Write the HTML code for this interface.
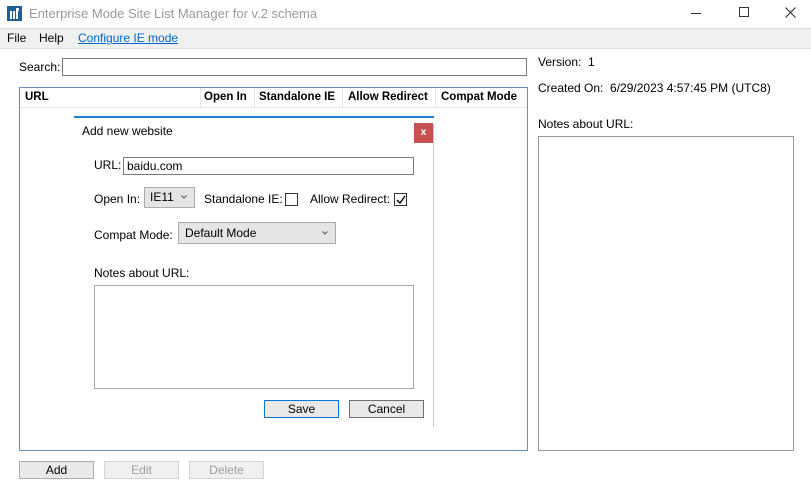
<!DOCTYPE html>
<html><head><style>
*{box-sizing:border-box;margin:0;padding:0}
body{width:811px;height:486px;background:#fff;font-family:"Segoe UI","Liberation Sans",sans-serif;font-size:12px;color:#000;position:relative;overflow:hidden}
.a{position:absolute}
.btn{position:absolute;height:18px;background:#e9e9e9;border:1px solid #adadad;text-align:center;line-height:16px;font-size:12px}
</style></head><body>
<div class="a" style="left:0;top:0;width:811px;height:28px;background:#fff"></div>
<div class="a" style="left:7px;top:6px;width:15px;height:15px;background:#1f5f9e">
 <div class="a" style="left:3px;top:5px;width:9px;height:8px;background:repeating-linear-gradient(90deg,#fff 0 2px,transparent 2px 3px)"></div>
 <div class="a" style="left:9px;top:2px;width:3px;height:3px;background:#fff"></div>
</div>
<div class="a" style="left:29px;top:6px;font-size:13px;color:#9a9a9a">Enterprise Mode Site List Manager for v.2 schema</div>
<div class="a" style="left:691px;top:13px;width:10px;height:1px;background:#333"></div>
<div class="a" style="left:739px;top:7px;width:10px;height:10px;border:1px solid #333"></div>
<svg class="a" style="left:785px;top:7px" width="11" height="11"><path d="M0.5 0.5L10.5 10.5M10.5 0.5L0.5 10.5" stroke="#333" stroke-width="1.1"/></svg>
<div class="a" style="left:0;top:28px;width:811px;height:21px;background:#f0f0f0;border-top:1px solid #ddd;border-bottom:1px solid #ddd"></div>
<div class="a" style="left:7px;top:31px">File</div>
<div class="a" style="left:39px;top:31px">Help</div>
<div class="a" style="left:78px;top:31px;color:#0066cc;text-decoration:underline">Configure IE mode</div>
<div class="a" style="left:19px;top:60px">Search:</div>
<div class="a" style="left:62px;top:58px;width:465px;height:18px;border:1px solid #7a7a7a"></div>
<div class="a" style="left:19px;top:87px;width:509px;height:364px;border:1px solid #6d8fb5"></div>
<div class="a" style="left:20px;top:88px;width:507px;height:20px;border-bottom:1px solid #e5e5e5;font-weight:bold;font-size:11.5px">
 <span class="a" style="left:5px;top:3px">URL</span>
 <span class="a" style="left:180px;top:0;width:1px;height:20px;background:#e5e5e5"></span>
 <span class="a" style="left:184px;top:3px">Open In</span>
 <span class="a" style="left:234px;top:0;width:1px;height:20px;background:#e5e5e5"></span>
 <span class="a" style="left:239px;top:3px">Standalone IE</span>
 <span class="a" style="left:322px;top:0;width:1px;height:20px;background:#e5e5e5"></span>
 <span class="a" style="left:328px;top:3px">Allow Redirect</span>
 <span class="a" style="left:415px;top:0;width:1px;height:20px;background:#e5e5e5"></span>
 <span class="a" style="left:421px;top:3px">Compat Mode</span>
</div>
<div class="a" style="left:74px;top:116px;width:360px;height:2px;background:#1e80d8"></div>
<div class="a" style="left:433px;top:125px;width:1px;height:302px;background:#c8c8c8"></div>
<div class="a" style="left:82px;top:124px">Add new website</div>
<div class="a" style="left:414px;top:123px;width:19px;height:20px;background:#c75050;color:#fff;font-size:10px;font-weight:bold;text-align:center;line-height:19px">x</div>
<div class="a" style="left:94px;top:158px">URL:</div>
<div class="a" style="left:123px;top:157px;width:291px;height:18px;border:1px solid #7a7a7a;padding-left:3px;line-height:16px">baidu.com</div>
<div class="a" style="left:94px;top:192px">Open In:</div>
<div class="a" style="left:144px;top:187px;width:51px;height:21px;background:#e5e5e5;border:1px solid #acacac;padding-left:5px;line-height:19px">IE11</div>
<svg class="a" style="left:181px;top:195px" width="6" height="4"><path d="M0.5 0.5L3 3L5.5 0.5" stroke="#555" fill="none"/></svg>
<div class="a" style="left:204px;top:192px">Standalone IE:</div>
<div class="a" style="left:285px;top:193px;width:13px;height:13px;border:1px solid #333"></div>
<div class="a" style="left:310px;top:192px">Allow Redirect:</div>
<div class="a" style="left:394px;top:193px;width:13px;height:13px;border:1px solid #333"></div>
<svg class="a" style="left:396px;top:195px" width="10" height="10"><path d="M1 5L4 8L9 1" stroke="#000" stroke-width="1.4" fill="none"/></svg>
<div class="a" style="left:94px;top:228px">Compat Mode:</div>
<div class="a" style="left:178px;top:222px;width:158px;height:22px;background:#e5e5e5;border:1px solid #acacac;padding-left:6px;line-height:20px">Default Mode</div>
<svg class="a" style="left:322px;top:231px" width="6" height="4"><path d="M0.5 0.5L3 3L5.5 0.5" stroke="#555" fill="none"/></svg>
<div class="a" style="left:94px;top:266px">Notes about URL:</div>
<div class="a" style="left:94px;top:285px;width:320px;height:104px;border:1px solid #aaa"></div>
<div class="btn" style="left:264px;top:400px;width:75px;border-color:#0078d7">Save</div>
<div class="btn" style="left:349px;top:400px;width:75px;border-color:#707070">Cancel</div>
<div class="a" style="left:538px;top:55px">Version:&nbsp; 1</div>
<div class="a" style="left:538px;top:81px">Created On:&nbsp; 6/29/2023 4:57:45 PM (UTC8)</div>
<div class="a" style="left:538px;top:117px">Notes about URL:</div>
<div class="a" style="left:538px;top:136px;width:256px;height:315px;border:1px solid #999"></div>
<div class="btn" style="left:19px;top:461px;width:75px;border-color:#adadad">Add</div>
<div class="btn" style="left:104px;top:461px;width:75px;background:#f0f0f0;border-color:#d5d5d5;color:#a0a0a0">Edit</div>
<div class="btn" style="left:189px;top:461px;width:75px;background:#f0f0f0;border-color:#d5d5d5;color:#a0a0a0">Delete</div>
</body></html>
